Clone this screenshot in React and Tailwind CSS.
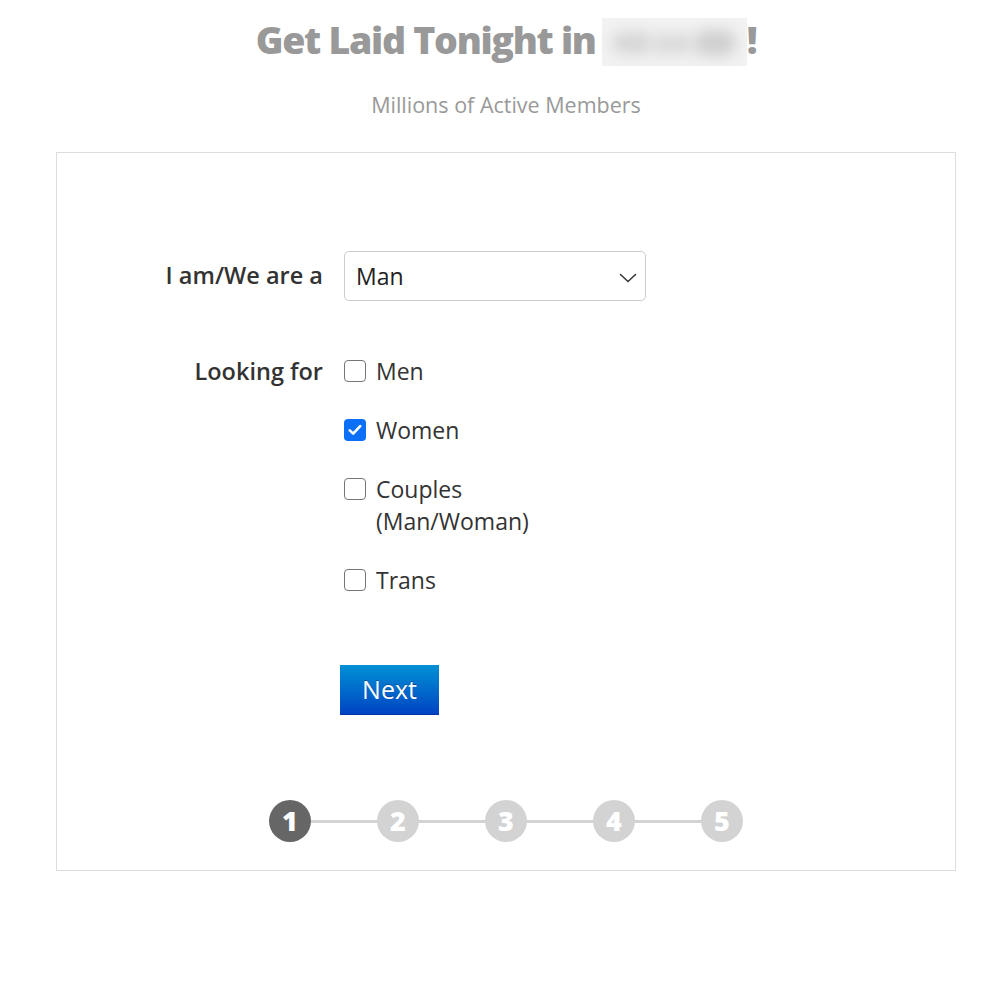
import React, { useState } from 'react';

const options = ['Men', 'Women', 'Couples', 'Trans'];

function Checkbox({ checked }) {
  if (checked) {
    return (
      <span className="mt-[5px] flex h-[22px] w-[22px] shrink-0 items-center justify-center rounded-[4px] bg-[#0b6ff7]">
        <svg width="14" height="12" viewBox="0 0 14 12" fill="none">
          <path d="M1.8 6.4 L5.2 9.6 L12.2 2.2" stroke="white" strokeWidth="2.6" strokeLinecap="round" strokeLinejoin="round" />
        </svg>
      </span>
    );
  }
  return <span className="mt-[5px] block h-[22px] w-[22px] shrink-0 rounded-[4px] border-[1.5px] border-[#767676] bg-white" />;
}

export default function App() {
  const [looking, setLooking] = useState({ Men: false, Women: true, Couples: false, Trans: false });

  return (
    <div className="min-h-screen bg-white" style={{ fontFamily: '"Open Sans", "Liberation Sans", sans-serif' }}>
      <div className="ml-[56px] w-[900px]">
        {/* heading */}
        <h1 className="flex items-start justify-center pt-[14px] text-[37.5px] leading-[52px] font-extrabold tracking-[-1.3px] text-[#999999]">
          <span>Get Laid Tonight in</span>
          {/* city name is blurred out */}
          <span className="relative mt-[4px] ml-[6px] block h-[48px] w-[145px] overflow-hidden bg-[#f2f2f2]">
            <span className="absolute top-[14px] left-[10px] block h-[22px] w-[40px] rounded-full bg-[#d6d6d6] blur-[7px]" />
            <span className="absolute top-[16px] left-[48px] block h-[20px] w-[44px] rounded-full bg-[#dadada] blur-[7px]" />
            <span className="absolute top-[12px] left-[92px] block h-[26px] w-[42px] rounded-full bg-[#cfcfcf] blur-[7px]" />
          </span>
          <span>!</span>
        </h1>
        <p className="mt-[24px] text-center text-[21.5px] leading-[30px] text-[#999999]">Millions of Active Members</p>

        {/* card */}
        <div className="mt-[32px] border border-[#dddddd] pt-[98px] pb-[28px]">
          <div className="grid grid-cols-[266px_1fr] gap-x-[21px]">
            <label className="flex items-center justify-end text-[23.5px] font-semibold text-[#333333]">I am/We are a</label>
            <div className="relative h-[50px] w-[302px] rounded-[5px] border border-[#cccccc] bg-white">
              <span className="absolute top-1/2 left-[11px] -translate-y-1/2 text-[23px] text-[#222222]">Man</span>
              <svg className="absolute top-[21px] right-[8px]" width="18" height="10" viewBox="0 0 18 10" fill="none">
                <path d="M1.5 1.5 L9 8.5 L16.5 1.5" stroke="#333" strokeWidth="1.5" strokeLinecap="round" strokeLinejoin="round" />
              </svg>
            </div>

            <label className="mt-[54px] text-right text-[23.5px] leading-[32px] font-semibold text-[#333333]">Looking for</label>
            <div className="mt-[54px] flex flex-col gap-[27px]">
              {options.map((o) => (
                <div
                  key={o}
                  className="flex cursor-pointer items-start gap-[10px]"
                  onClick={() => setLooking({ ...looking, [o]: !looking[o] })}
                >
                  <Checkbox checked={looking[o]} />
                  <span className="text-[23px] leading-[32px] text-[#333333]">
                    {o === 'Couples' ? (
                      <>
                        Couples
                        <br />
                        (Man/Woman)
                      </>
                    ) : (
                      o
                    )}
                  </span>
                </div>
              ))}
            </div>

            <div />
            <div className="mt-[69px]">
              <button className="-ml-[4px] h-[50px] w-[99px] border-b border-[#0036a8] bg-linear-to-b from-[#0790d4] to-[#0042c2] text-[25px] font-medium text-white [text-shadow:0_-1px_0_rgba(0,0,0,0.3)]">
                Next
              </button>
            </div>
          </div>

          {/* steps */}
          <div className="mt-[85px] flex items-center justify-center">
            {[1, 2, 3, 4, 5].map((n) => (
              <React.Fragment key={n}>
                {n > 1 && <div className="h-[3px] w-[66px] bg-[#d3d3d3]" />}
                <div
                  className={
                    n === 1
                      ? 'flex h-[42px] w-[42px] items-center justify-center rounded-full bg-[#666666] text-[27px] font-extrabold text-white'
                      : 'flex h-[42px] w-[42px] items-center justify-center rounded-full bg-[#d3d3d3] text-[27px] font-extrabold text-white'
                  }
                >
                  {n}
                </div>
              </React.Fragment>
            ))}
          </div>
        </div>
      </div>
    </div>
  );
}
